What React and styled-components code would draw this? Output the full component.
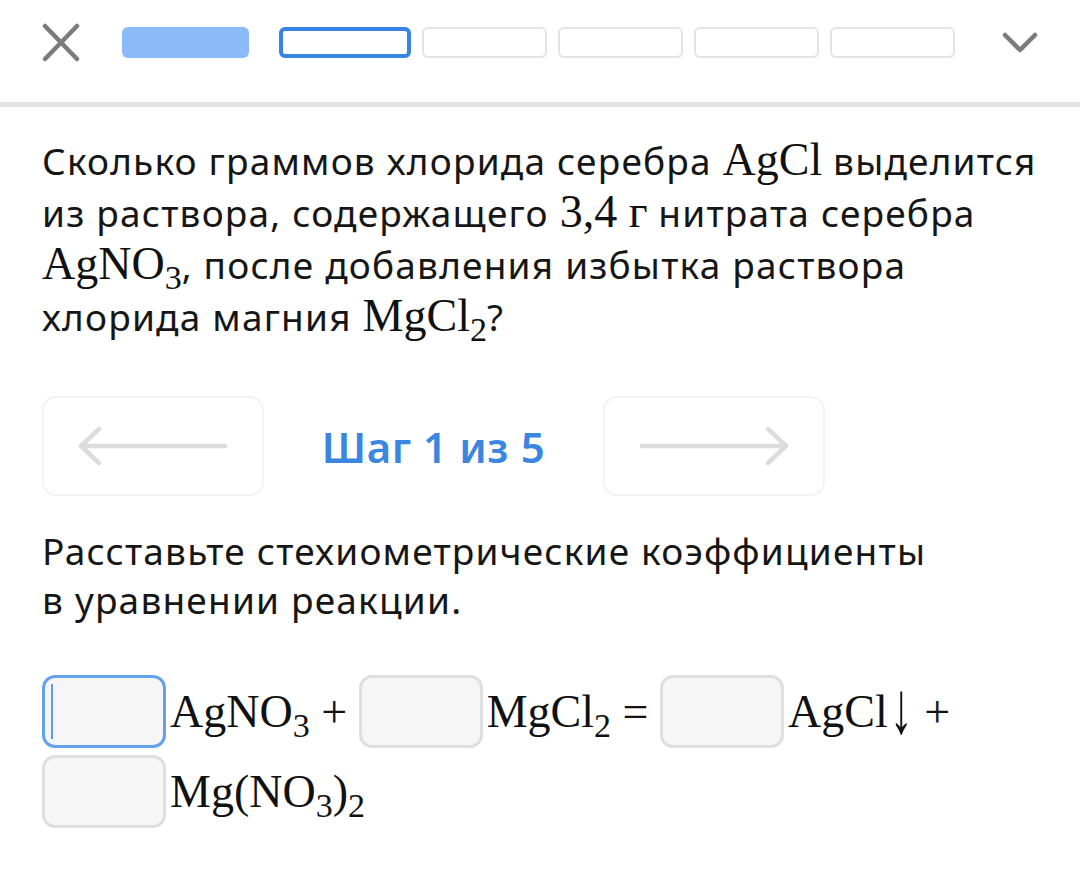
import React from 'react'
import styled, { createGlobalStyle } from 'styled-components'

const GlobalStyle = createGlobalStyle`
  html, body {
    margin: 0;
    padding: 0;
    background: #fff;
  }
  body {
    font-family: "Noto Sans", "Open Sans", sans-serif;
    color: #161616;
  }
`;

const Page = styled.div`
  width: 1080px;
  min-height: 887px;
  background: #fff;
`;

const Header = styled.header`
  display: flex;
  align-items: center;
  height: 39px;
  padding: 23px 42px 40px 42px;
  border-bottom: 5px solid #e3e3e3;
`;

const IconButton = styled.button`
  display: flex;
  align-items: center;
  justify-content: center;
  width: ${p => p.$size}px;
  height: 39px;
  padding: 0;
  border: none;
  background: none;
  margin-left: ${p => p.$push ? 'auto' : '0'};
`;

const Progress = styled.div`
  display: flex;
  align-items: center;
  gap: 11px;
  margin-left: 42px;
`;

const Segment = styled.div`
  box-sizing: border-box;
  width: ${p => p.$w}px;
  height: 31px;
  border-radius: 6px;
  margin-right: ${p => p.$after || 0}px;
  background: ${p => p.$state === 'done' ? '#8bbaf8' : '#fff'};
  border: ${p =>
    p.$state === 'done' ? 'none'
    : p.$state === 'current' ? '4px solid #3784e2'
    : '2px solid #e4e4e4'};
`;

const Content = styled.main`
  padding: 27px 42px 0 42px;
`;

const Paragraph = styled.p`
  margin: 0;
  font-size: 37px;
  line-height: 51px;
  letter-spacing: 1.2px;
`;

const Chem = styled.span`
  font-family: "Liberation Serif", "Times New Roman", serif;
  font-size: 46px;
  letter-spacing: 0;
  color: #111;
`;

const Sub = styled.sub`
  font-size: 0.74em;
  line-height: 0;
  vertical-align: -0.3em;
`;

const Arrow = styled.span`
  display: inline-block;
  margin-left: 2px;
  transform: translateY(-3px) scaleY(1.6);
`;

const StepNav = styled.nav`
  display: grid;
  grid-template-columns: 222px 1fr 222px;
  align-items: center;
  width: 783px;
  margin-top: 54px;
`;

const ArrowButton = styled.button`
  box-sizing: border-box;
  height: 100px;
  border: 2px solid #f3f3f3;
  border-radius: 14px;
  background: #fff;
  display: flex;
  align-items: center;
  justify-content: center;
  padding: 0;
`;

const StepLabel = styled.div`
  text-align: center;
  font-size: 42px;
  font-weight: 600;
  color: #3a86e0;
  letter-spacing: 0.6px;
`;

const Task = styled(Paragraph)`
  margin-top: 30px;
  line-height: 49px;
`;

const Equation = styled.div`
  display: flex;
  flex-wrap: wrap;
  align-items: center;
  row-gap: 7px;
  margin-top: 51px;
  width: 960px;
`;

const Term = styled.div`
  display: flex;
  align-items: center;
  white-space: pre;
`;

const CoefBox = styled.div`
  position: relative;
  box-sizing: border-box;
  width: 124px;
  height: 73px;
  margin-right: 4px;
  border-radius: 13px;
  border: 3.5px solid ${p => p.$focused ? '#64a2ee' : '#dfdfdf'};
  background: #f6f6f6;

  &::after {
    content: '';
    display: ${p => p.$focused ? 'block' : 'none'};
    position: absolute;
    left: 6px;
    top: 6px;
    bottom: 6px;
    width: 2px;
    background: #5e9be8;
  }
`;

const CoefInput = styled.input`
  width: 100%;
  height: 100%;
  box-sizing: border-box;
  border: none;
  outline: none;
  background: transparent;
  font-size: 40px;
  padding: 0 12px;
`;

const Formula = styled(Chem)`
  line-height: 73px;
`;

const CloseIcon = () => (
  <svg width="38" height="39" viewBox="0 0 38 39">
    <path d="M3 3 L35 36 M35 3 L3 36" stroke="#7b7b7b" strokeWidth="4.5" strokeLinecap="round" fill="none" />
  </svg>
);

const ChevronIcon = () => (
  <svg width="36" height="22" viewBox="0 0 36 22">
    <path d="M3 3 L18 18 L33 3" stroke="#7b7b7b" strokeWidth="4.5" strokeLinecap="round" strokeLinejoin="round" fill="none" />
  </svg>
);

const LongArrow = ({ dir }) => (
  <svg width="152" height="40" viewBox="0 0 152 40"
    style={dir === 'right' ? { transform: 'scaleX(-1)' } : undefined}>
    <path d="M4 20 H148 M22 3 L4 20 L22 37" stroke="#dcdcdc" strokeWidth="4.5" strokeLinecap="round" strokeLinejoin="round" fill="none" />
  </svg>
);

const segments = [
  { state: 'done', w: 127, after: 19 },
  { state: 'current', w: 132 },
  { state: 'todo', w: 125 },
  { state: 'todo', w: 125 },
  { state: 'todo', w: 125 },
  { state: 'todo', w: 125 },
];

const terms = [
  { focused: true, formula: <>AgNO<Sub>3</Sub> + </> },
  { formula: <>MgCl<Sub>2</Sub> = </> },
  { formula: <>AgCl<Arrow>↓</Arrow> + </> },
  { formula: <>Mg(NO<Sub>3</Sub>)<Sub>2</Sub></> },
];

export default function App() {
  return (
    <Page>
      <GlobalStyle />
      <Header>
        <IconButton $size={38} aria-label="Закрыть"><CloseIcon /></IconButton>
        <Progress>
          {segments.map((s, i) => (
            <Segment key={i} $state={s.state} $w={s.w} $after={s.after} />
          ))}
        </Progress>
        <IconButton $size={36} $push aria-label="Развернуть"><ChevronIcon /></IconButton>
      </Header>

      <Content>
        <Paragraph>
          Сколько граммов хлорида серебра <Chem>AgCl</Chem> выделится из раствора, содержащего <Chem>3,4 г</Chem> нитрата серебра <Chem>AgNO<Sub>3</Sub></Chem>, после добавления избытка раствора хлорида магния <Chem>MgCl<Sub>2</Sub></Chem>?
        </Paragraph>

        <StepNav>
          <ArrowButton aria-label="Назад"><LongArrow dir="left" /></ArrowButton>
          <StepLabel>Шаг 1 из 5</StepLabel>
          <ArrowButton aria-label="Вперёд"><LongArrow dir="right" /></ArrowButton>
        </StepNav>

        <Task>
          Расставьте стехиометрические коэффициенты<br />в уравнении реакции.
        </Task>

        <Equation>
          {terms.map((t, i) => (
            <Term key={i}>
              <CoefBox $focused={t.focused}><CoefInput readOnly /></CoefBox>
              <Formula>{t.formula}</Formula>
            </Term>
          ))}
        </Equation>
      </Content>
    </Page>
  );
}
